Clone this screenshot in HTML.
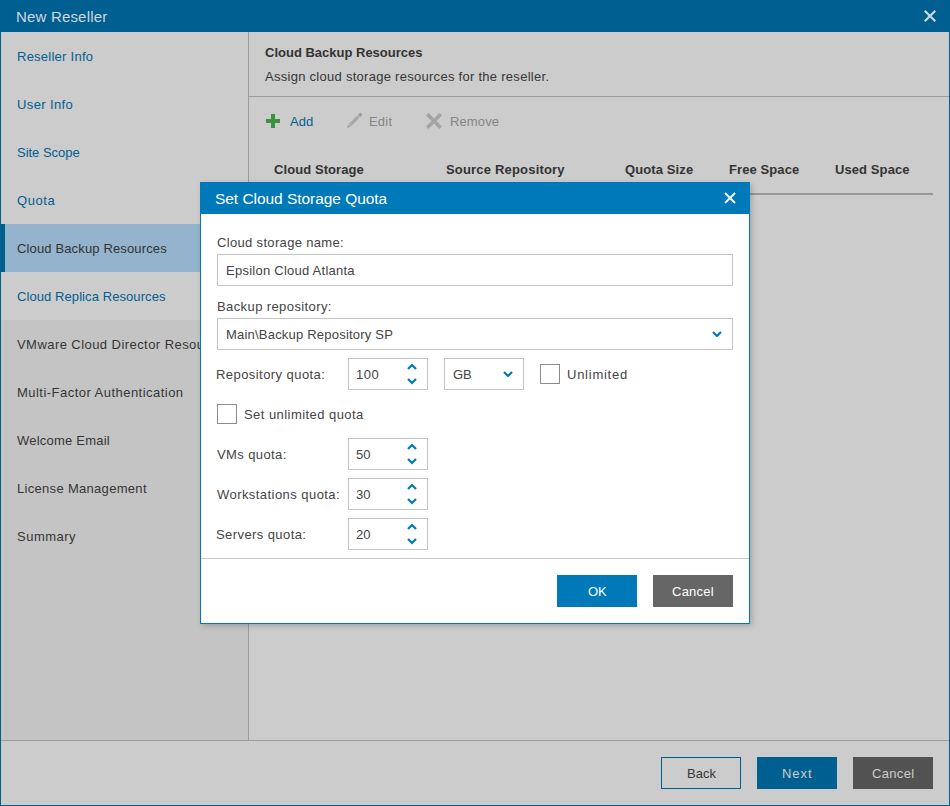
<!DOCTYPE html>
<html><head><meta charset="utf-8">
<style>
*{box-sizing:border-box;margin:0;padding:0}
html,body{width:950px;height:806px;overflow:hidden;background:#cccccc;font-family:"Liberation Sans",sans-serif;position:relative}
.abs{position:absolute}
.t{position:absolute;white-space:nowrap;font-size:13px;line-height:16px}
.inp{position:absolute;border:1px solid #c4c4c4;background:#fff;height:32px}
.chk{position:absolute;width:20px;height:20px;border:1px solid #8c8c8c;background:#fff}
</style></head><body>
<div class="abs" style="left:0;top:0;width:950px;height:32px;background:#005f91"></div>
<svg class="abs" style="left:924px;top:10px" width="12" height="12" viewBox="0 0 12 12"><path d="M0.7 0.7L11.3 11.3M11.3 0.7L0.7 11.3" stroke="#d5dadd" stroke-width="2"/></svg>
<div class="abs" style="left:1px;top:32px;width:247px;height:708px;background:#c4c4c4"></div>
<div class="abs" style="left:1px;top:32px;width:247px;height:192px;background:#cccccc"></div>
<div class="abs" style="left:1px;top:224px;width:247px;height:48px;background:#94b3cc"></div>
<div class="abs" style="left:1px;top:224px;width:4px;height:48px;background:#005f91"></div>
<div class="abs" style="left:1px;top:272px;width:247px;height:48px;background:#cccccc"></div>
<div class="abs" style="left:0;top:0;width:200px;height:740px;overflow:hidden">
<div class="t" style="left:17px;top:49px;color:#005f91;letter-spacing:0.25px">Reseller Info</div>
<div class="t" style="left:17px;top:97px;color:#005f91;letter-spacing:0.376px">User Info</div>
<div class="t" style="left:17px;top:145px;color:#005f91;letter-spacing:-0.023px">Site Scope</div>
<div class="t" style="left:17px;top:193px;color:#005f91;letter-spacing:0.6px">Quota</div>
<div class="t" style="left:17px;top:241px;color:#333;letter-spacing:0.143px">Cloud Backup Resources</div>
<div class="t" style="left:17px;top:289px;color:#005f91;letter-spacing:0.081px">Cloud Replica Resources</div>
<div class="t" style="left:17px;top:337px;color:#363636;letter-spacing:0.44px">VMware Cloud Director Resources</div>
<div class="t" style="left:17px;top:385px;color:#363636;letter-spacing:0.468px">Multi-Factor Authentication</div>
<div class="t" style="left:17px;top:433px;color:#363636;letter-spacing:0.218px">Welcome Email</div>
<div class="t" style="left:17px;top:481px;color:#363636;letter-spacing:0.307px">License Management</div>
<div class="t" style="left:17px;top:529px;color:#363636;letter-spacing:0.5px">Summary</div>
</div>
<div class="abs" style="left:248px;top:32px;width:1px;height:708px;background:#9c9c9c"></div>
<div class="abs" style="left:249px;top:96px;width:700px;height:1px;background:#9c9c9c"></div>
<div class="abs" style="left:271px;top:114px;width:4px;height:14px;background:#3d923d"></div><div class="abs" style="left:266px;top:119px;width:14px;height:4px;background:#3d923d"></div>
<svg class="abs" style="left:342px;top:108px" width="24" height="24" viewBox="0 0 24 24"><g transform="translate(5,20) rotate(-45)"><path d="M0 0L3.4 -1.6V1.6Z" fill="#9c9c9c"/><rect x="4.1" y="-1.6" width="12" height="3.2" fill="#a8a8a8"/><rect x="16.8" y="-1.6" width="3.6" height="3.2" fill="#9c9c9c"/></g></svg>
<svg class="abs" style="left:426px;top:113px" width="16" height="16" viewBox="0 0 16 16"><path d="M1.2 1.2L14.8 14.8M14.8 1.2L1.2 14.8" stroke="#a4a4a4" stroke-width="3.6"/></svg>
<div class="abs" style="left:265px;top:193px;width:668px;height:2px;background:#989898"></div>
<div class="t" style="left:16px;top:9px;color:#cfd6dc;font-size:15px;letter-spacing:0.182px">New Reseller</div>
<div class="t" style="left:265px;top:45px;color:#333;font-weight:bold">Cloud Backup Resources</div>
<div class="t" style="left:265px;top:69px;color:#363636;letter-spacing:0.277px">Assign cloud storage resources for the reseller.</div>
<div class="t" style="left:290px;top:114px;color:#005f91">Add</div>
<div class="t" style="left:369px;top:114px;color:#858585;letter-spacing:0.201px">Edit</div>
<div class="t" style="left:450px;top:114px;color:#858585;letter-spacing:0.12px">Remove</div>
<div class="t" style="left:274px;top:162px;color:#333;font-weight:bold;letter-spacing:0.083px">Cloud Storage</div>
<div class="t" style="left:446px;top:162px;color:#333;font-weight:bold;letter-spacing:0.188px">Source Repository</div>
<div class="t" style="left:625px;top:162px;color:#333;font-weight:bold;letter-spacing:0.111px">Quota Size</div>
<div class="t" style="left:729px;top:162px;color:#333;font-weight:bold;letter-spacing:0.09px">Free Space</div>
<div class="t" style="left:835px;top:162px;color:#333;font-weight:bold;letter-spacing:0.09px">Used Space</div>
<div class="abs" style="left:1px;top:740px;width:948px;height:1px;background:#9c9c9c"></div>
<div class="abs" style="left:661px;top:757px;width:80px;height:32px;border:1px solid #005f91"></div>
<div class="abs" style="left:757px;top:757px;width:80px;height:32px;background:#005f91"></div>
<div class="abs" style="left:853px;top:757px;width:80px;height:32px;background:#525252"></div>
<div class="t" style="left:687px;top:766px;color:#363636;letter-spacing:0.066px">Back</div>
<div class="t" style="left:782px;top:766px;color:#cccccc;letter-spacing:0.934px">Next</div>
<div class="t" style="left:872px;top:766px;color:#cccccc;letter-spacing:0.32px">Cancel</div>
<div class="abs" style="left:0;top:32px;width:1px;height:774px;background:#005f91"></div>
<div class="abs" style="left:949px;top:32px;width:1px;height:774px;background:#005f91"></div>
<div class="abs" style="left:0;top:805px;width:950px;height:1px;background:#005f91"></div>
<div class="abs" style="left:200px;top:182px;width:550px;height:442px;border:1px solid #0079b8;background:#fff;box-shadow:2px 2px 6px rgba(0,0,0,0.2)">
<div class="abs" style="left:0;top:0;width:548px;height:31px;background:#0079b8"></div>
<svg class="abs" style="left:523px;top:9px" width="12" height="12" viewBox="0 0 12 12"><path d="M1 1L11 11M11 1L1 11" stroke="#fff" stroke-width="1.8"/></svg>
<div class="inp" style="left:16px;top:71px;width:516px"></div>
<div class="inp" style="left:16px;top:135px;width:516px"></div>
<svg class="abs" style="left:511px;top:148px" width="10" height="6" viewBox="0 0 10 6"><path d="M1 1L5 5L9 1" fill="none" stroke="#0079b8" stroke-width="2.2"/></svg>
<div class="inp" style="left:147px;top:175px;width:80px"></div>
<svg class="abs" style="left:206px;top:181px" width="10" height="21" viewBox="0 0 10 21"><path d="M1 5L5 1L9 5M1 15L5 19L9 15" fill="none" stroke="#0079b8" stroke-width="2.2"/></svg>
<div class="inp" style="left:243px;top:175px;width:80px"></div>
<svg class="abs" style="left:302px;top:188px" width="10" height="6" viewBox="0 0 10 6"><path d="M1 1L5 5L9 1" fill="none" stroke="#0079b8" stroke-width="2.2"/></svg>
<div class="chk" style="left:339px;top:181px"></div>
<div class="chk" style="left:16px;top:221px"></div>
<div class="inp" style="left:147px;top:255px;width:80px"></div>
<svg class="abs" style="left:206px;top:261px" width="10" height="21" viewBox="0 0 10 21"><path d="M1 5L5 1L9 5M1 15L5 19L9 15" fill="none" stroke="#0079b8" stroke-width="2.2"/></svg>
<div class="inp" style="left:147px;top:295px;width:80px"></div>
<svg class="abs" style="left:206px;top:301px" width="10" height="21" viewBox="0 0 10 21"><path d="M1 5L5 1L9 5M1 15L5 19L9 15" fill="none" stroke="#0079b8" stroke-width="2.2"/></svg>
<div class="inp" style="left:147px;top:335px;width:80px"></div>
<svg class="abs" style="left:206px;top:341px" width="10" height="21" viewBox="0 0 10 21"><path d="M1 5L5 1L9 5M1 15L5 19L9 15" fill="none" stroke="#0079b8" stroke-width="2.2"/></svg>
<div class="abs" style="left:0;top:375px;width:548px;height:1px;background:#c8c8c8"></div>
<div class="abs" style="left:356px;top:392px;width:80px;height:32px;background:#0079b8"></div>
<div class="abs" style="left:452px;top:392px;width:80px;height:32px;background:#666666"></div>
<div class="t" style="left:14px;top:8px;color:#fff;font-size:15.5px;letter-spacing:-0.045px">Set Cloud Storage Quota</div>
<div class="t" style="left:16px;top:52px;color:#444444;letter-spacing:0.333px">Cloud storage name:</div>
<div class="t" style="left:25px;top:80px;color:#444444;letter-spacing:0.25px">Epsilon Cloud Atlanta</div>
<div class="t" style="left:16px;top:116px;color:#444444;letter-spacing:0.399px">Backup repository:</div>
<div class="t" style="left:25px;top:144px;color:#444444;letter-spacing:0.208px">Main\Backup Repository SP</div>
<div class="t" style="left:15px;top:184px;color:#444444;letter-spacing:0.438px">Repository quota:</div>
<div class="t" style="left:155px;top:184px;color:#444444;letter-spacing:0.5px">100</div>
<div class="t" style="left:252px;top:184px;color:#444444">GB</div>
<div class="t" style="left:366px;top:184px;color:#444444;letter-spacing:0.75px">Unlimited</div>
<div class="t" style="left:43px;top:224px;color:#444444;letter-spacing:0.444px">Set unlimited quota</div>
<div class="t" style="left:16px;top:264px;color:#444444;letter-spacing:0.4px">VMs quota:</div>
<div class="t" style="left:155px;top:264px;color:#444444">50</div>
<div class="t" style="left:16px;top:304px;color:#444444;letter-spacing:0.444px">Workstations quota:</div>
<div class="t" style="left:155px;top:304px;color:#444444">30</div>
<div class="t" style="left:15px;top:344px;color:#444444;letter-spacing:0.415px">Servers quota:</div>
<div class="t" style="left:155px;top:344px;color:#444444">20</div>
<div class="t" style="left:387px;top:401px;color:#fff">OK</div>
<div class="t" style="left:471px;top:401px;color:#fff;letter-spacing:0.24px">Cancel</div>
</div>
</body></html>
